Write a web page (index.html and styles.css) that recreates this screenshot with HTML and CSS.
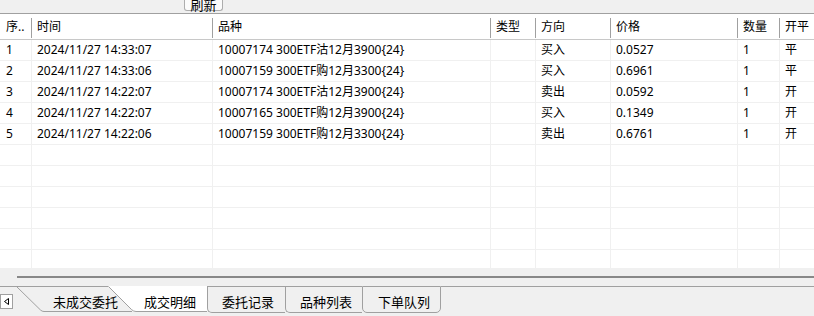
FILE: index.html
```html
<!DOCTYPE html>
<html lang="zh-CN">
<head>
<meta charset="utf-8">
<title>成交明细</title>
<link rel="stylesheet" href="styles.css">
</head>
<body>
<div class="app">
  <div class="toolbar">
    <button class="refresh-btn" type="button">刷新</button>
  </div>

  <div class="grid-head">
    <div class="hcell c-first">序..</div>
    <div class="hcell">时间</div>
    <div class="hcell">品种</div>
    <div class="hcell">类型</div>
    <div class="hcell">方向</div>
    <div class="hcell">价格</div>
    <div class="hcell">数量</div>
    <div class="hcell last">开平</div>
  </div>

  <div class="grid-body">
    <div class="row">
      <div class="cell c-first">1</div><div class="cell">2024/11/27 14:33:07</div><div class="cell">10007174 300ETF沽12月3900{24}</div><div class="cell"></div><div class="cell">买入</div><div class="cell">0.0527</div><div class="cell">1</div><div class="cell last">平</div>
    </div>
    <div class="row">
      <div class="cell c-first">2</div><div class="cell">2024/11/27 14:33:06</div><div class="cell">10007159 300ETF购12月3300{24}</div><div class="cell"></div><div class="cell">买入</div><div class="cell">0.6961</div><div class="cell">1</div><div class="cell last">平</div>
    </div>
    <div class="row">
      <div class="cell c-first">3</div><div class="cell">2024/11/27 14:22:07</div><div class="cell">10007174 300ETF沽12月3900{24}</div><div class="cell"></div><div class="cell">卖出</div><div class="cell">0.0592</div><div class="cell">1</div><div class="cell last">开</div>
    </div>
    <div class="row">
      <div class="cell c-first">4</div><div class="cell">2024/11/27 14:22:07</div><div class="cell">10007165 300ETF购12月3900{24}</div><div class="cell"></div><div class="cell">买入</div><div class="cell">0.1349</div><div class="cell">1</div><div class="cell last">开</div>
    </div>
    <div class="row">
      <div class="cell c-first">5</div><div class="cell">2024/11/27 14:22:06</div><div class="cell">10007159 300ETF购12月3300{24}</div><div class="cell"></div><div class="cell">卖出</div><div class="cell">0.6761</div><div class="cell">1</div><div class="cell last">开</div>
    </div>
    <div class="row"><div class="cell c-first"></div><div class="cell"></div><div class="cell"></div><div class="cell"></div><div class="cell"></div><div class="cell"></div><div class="cell"></div><div class="cell last"></div></div>
    <div class="row"><div class="cell c-first"></div><div class="cell"></div><div class="cell"></div><div class="cell"></div><div class="cell"></div><div class="cell"></div><div class="cell"></div><div class="cell last"></div></div>
    <div class="row"><div class="cell c-first"></div><div class="cell"></div><div class="cell"></div><div class="cell"></div><div class="cell"></div><div class="cell"></div><div class="cell"></div><div class="cell last"></div></div>
    <div class="row"><div class="cell c-first"></div><div class="cell"></div><div class="cell"></div><div class="cell"></div><div class="cell"></div><div class="cell"></div><div class="cell"></div><div class="cell last"></div></div>
    <div class="row"><div class="cell c-first"></div><div class="cell"></div><div class="cell"></div><div class="cell"></div><div class="cell"></div><div class="cell"></div><div class="cell"></div><div class="cell last"></div></div>
    <div class="row"><div class="cell c-first"></div><div class="cell"></div><div class="cell"></div><div class="cell"></div><div class="cell"></div><div class="cell"></div><div class="cell"></div><div class="cell last"></div></div>
  </div>

  <div class="footer">
    <div class="hscroll-bar"></div>
    <div class="tabbar">
      <div class="tabs-slanted">
        <svg class="tab-shapes" width="207" height="30" viewBox="0 0 207 30" aria-hidden="true">
          <path d="M0 0.5 H108.5" fill="none" stroke="#a0a0a0" stroke-width="1"/>
          <path d="M16.5 0.5 L40.5 24 Q42 25.5 44 25.5 H132" fill="none" stroke="#a0a0a0" stroke-width="1"/>
          <path d="M108 0 L131.5 23.5 Q133.5 26 136 26 H207 V0 Z" fill="#ffffff"/>
          <path d="M108.5 0.5 L131.5 23.5 Q133.5 25.5 136 25.5 H207" fill="none" stroke="#a0a0a0" stroke-width="1"/>
        </svg>
        <span class="scroll-btn">
          <svg width="11" height="13" viewBox="0 0 11 13" aria-hidden="true">
            <path d="M7.5 3.5 L3.5 6.5 L7.5 9.5 Z" fill="none" stroke="#000" stroke-width="1"/>
          </svg>
        </span>
        <span class="tab-label tab-label-1">未成交委托</span>
        <span class="tab-label tab-label-active">成交明细</span>
      </div>
      <div class="tab tab-a">委托记录</div>
      <div class="tab tab-b">品种列表</div>
      <div class="tab tab-c">下单队列</div>
      <div class="tabbar-rest"></div>
    </div>
  </div>
</div>
</body>
</html>
```

FILE: styles.css
```css
* {
  box-sizing: border-box;
}

html, body {
  margin: 0;
  padding: 0;
  background: #f0f0f0;
}

body {
  font-family: "Noto Sans", "Noto Sans CJK SC", sans-serif;
  font-size: 12px;
  color: #000;
  overflow: hidden;
}

.app {
  width: 814px;
  height: 316px;
  overflow: hidden;
  display: flex;
  flex-direction: column;
}

/* top toolbar strip */
.toolbar {
  height: 14px;
  flex: none;
  background: #f0f0f0;
  border-bottom: 1px solid #a0a0a0;
  display: flex;
  align-items: flex-start;
  padding-left: 184px;
}

.refresh-btn {
  width: 39px;
  height: 11px;
  margin: 0;
  padding: 0;
  font-family: "Noto Sans CJK SC", sans-serif;
  font-size: 13px;
  line-height: 6px;
  color: #000;
  background: #fbfbfb;
  border: 1px solid #adadad;
  border-top: none;
  border-radius: 0 0 3px 3px;
  text-align: center;
  overflow: visible;
}

/* grid header */
.grid-head,
.row {
  display: grid;
  grid-template-columns: 32px 181px 278px 45px 75px 127px 42px 1fr;
  background: #fff;
}

.grid-head {
  height: 26px;
  flex: none;
  border-bottom: 1px solid #c8c8c8;
}

.hcell {
  height: 20px;
  margin-top: 4px;
  line-height: 18px;
  padding-left: 5px;
  border-right: 1px solid #a0a0a0;
  white-space: nowrap;
  overflow: hidden;
}

.hcell.last {
  border-right: none;
}

.hcell.c-first {
  padding-left: 6px;
}

/* grid body */
.grid-body {
  height: 228px;
  flex: none;
  overflow: hidden;
  background: #fff;
}

.row {
  height: 21px;
  border-bottom: 1px solid #f0f0f0;
}

.cell {
  line-height: 20px;
  padding-left: 5px;
  border-right: 1px solid #f0f0f0;
  white-space: nowrap;
  overflow: hidden;
}

.cell.c-first {
  padding-left: 6px;
}

.cell.last {
  border-right: none;
}

/* footer: scroll bar line + tabs */
.footer {
  flex: 1;
  background: #f0f0f0;
  padding-top: 8px;
  display: flex;
  flex-direction: column;
}

.hscroll-bar {
  height: 2px;
  margin-left: 17px;
  background: #888888;
  flex: none;
}

.tabbar {
  margin-top: 8px;
  height: 30px;
  display: flex;
  align-items: flex-start;
  font-size: 13px;
  font-family: "Noto Sans CJK SC", sans-serif;
}

.tabs-slanted {
  position: relative;
  width: 207px;
  height: 30px;
  flex: none;
  display: flex;
  align-items: flex-start;
}

.tab-shapes {
  position: absolute;
  left: 0;
  top: 0;
  display: block;
}

.scroll-btn {
  position: relative;
  width: 13px;
  height: 15px;
  margin-top: 8px;
  background: #fff;
  border: 1px solid #a0a0a0;
  display: flex;
  align-items: center;
  justify-content: center;
}

.scroll-btn svg {
  display: block;
}

.tab-label {
  position: relative;
  padding-top: 5px;
  line-height: 21px;
  white-space: nowrap;
}

.tab-label-1 {
  margin-left: 40px;
  width: 65px;
}

.tab-label-active {
  margin-left: 26px;
}

.tab {
  height: 27px;
  flex: none;
  border-top: 1px solid #a0a0a0;
  border-left: 1px solid #a0a0a0;
  border-bottom: 1px solid #a0a0a0;
  border-bottom-left-radius: 5px;
  padding-top: 4px;
  line-height: 21px;
  white-space: nowrap;
}

.tab-a {
  width: 78px;
  padding-left: 14px;
}

.tab-b {
  width: 77px;
  padding-left: 14px;
}

.tab-c {
  width: 79px;
  padding-left: 15px;
  border-right: 1px solid #a0a0a0;
  border-bottom-right-radius: 5px;
}

.tabbar-rest {
  flex: 1;
  height: 1px;
  background: #a0a0a0;
}
```
